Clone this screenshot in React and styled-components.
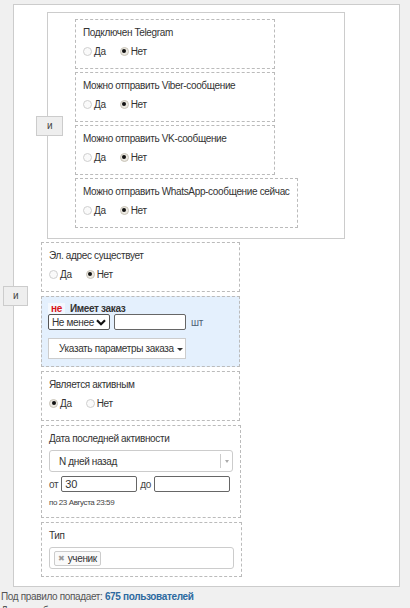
import React from 'react';
import styled, { createGlobalStyle } from 'styled-components';

const GlobalStyle = createGlobalStyle`
  html, body {
    margin: 0;
    padding: 0;
    background: #f0f0f0;
    font-family: "Liberation Sans", Arial, sans-serif;
    font-size: 10px;
    letter-spacing: -0.35px;
    color: #333;
  }
  * { box-sizing: border-box; }
`;

const Page = styled.div`
  padding-top: 4px;
  height: 608px;
  overflow: hidden;
`;

const Group = styled.div`
  position: relative;
  background: #fff;
  border: 1px solid #ccc;
  padding: ${(p) => (p.nested ? '6px 0 10px 27px' : '7px 0 9px 27px')};
  margin: ${(p) => (p.nested ? '0 0 3px 6px' : '0 10px 0 13px')};
  width: ${(p) => (p.nested ? '298px' : 'auto')};
`;

const AndButton = styled.div`
  position: absolute;
  left: ${(p) => (p.nested ? '-12px' : '-11px')};
  top: 50%;
  transform: translateY(-50%);
  width: ${(p) => (p.nested ? '27px' : '25px')};
  height: 20px;
  background: #eee;
  border: 1px solid #ccc;
  display: flex;
  align-items: center;
  justify-content: center;
  font-size: 10px;
  color: #444;
`;

const Condition = styled.div`
  display: table;
  min-width: ${(p) => (p.nested ? '200px' : '199px')};
  border: 1px dashed #bbb;
  background: ${(p) => (p.highlight ? '#e4f0fd' : '#fff')};
  padding: ${(p) => (p.highlight ? '5px 6px 7px' : `6px 7px ${p.pb ?? 10}px`)};
  margin-bottom: ${(p) => (p.nested ? 3 : 4)}px;

  &:last-child {
    margin-bottom: 0;
  }
`;

const Title = styled.div`
  line-height: 14px;
  margin-bottom: 4px;
  color: #333;
  white-space: nowrap;
`;

const RadioRow = styled.div`
  display: flex;
  align-items: center;
  gap: 14px;
  height: 14px;
`;

const RadioLabel = styled.label`
  display: flex;
  align-items: center;
  gap: 2px;
  color: #333;
`;

const RadioDot = styled.span`
  width: 9px;
  height: 9px;
  border-radius: 50%;
  border: 1px solid ${(p) => (p.checked ? '#c9c4b8' : '#cfcfcf')};
  background: ${(p) => (p.checked ? '#ebe8e1' : '#fafafa')};
  display: flex;
  align-items: center;
  justify-content: center;

  &::after {
    content: '';
    display: ${(p) => (p.checked ? 'block' : 'none')};
    width: 4px;
    height: 4px;
    border-radius: 50%;
    background: #111;
  }
`;

const OrderHead = styled.div`
  display: flex;
  align-items: center;
  gap: 5px;
  height: 12px;
`;

const NotBadge = styled.span`
  color: #d9141a;
  font-weight: bold;
  background: #f3f8fe;
  padding: 0 3px;
  line-height: 11px;
`;

const Bold = styled.span`
  font-weight: bold;
  color: #333;
`;

const FieldRow = styled.div`
  display: flex;
  align-items: center;
  gap: ${(p) => p.gap || 4}px;
  margin-bottom: ${(p) => p.mb || 0}px;
  white-space: nowrap;
`;

const FakeSelect = styled.div`
  width: 62px;
  height: 16px;
  border: 1px solid #555;
  border-radius: 2px;
  background: #fff;
  display: flex;
  align-items: center;
  justify-content: space-between;
  padding: 0 3px 0 3px;
  color: #333;
  white-space: nowrap;
`;

const TextInput = styled.div`
  width: ${(p) => p.w}px;
  height: 16px;
  border: 1px solid #666;
  border-radius: 2px;
  background: #fff;
  padding: 0 3px;
  line-height: 14px;
  color: #333;
  font-size: 11px;
  letter-spacing: 0;
`;

const Unit = styled.span`
  color: #4e6275;
  margin-left: 1px;
`;

const DropButton = styled.div`
  display: inline-flex;
  align-items: center;
  gap: 3px;
  height: 21px;
  width: 138px;
  padding: 0 0 0 10px;
  border: 1px solid #ccc;
  background: #fff;
  color: #333;
  white-space: nowrap;
`;

const Caret = styled.span`
  width: 0;
  height: 0;
  border-left: 3px solid transparent;
  border-right: 3px solid transparent;
  border-top: 3px solid #333;
  margin-top: 1px;
`;

const WideSelect = styled.div`
  width: 184px;
  height: 22px;
  border: 1px solid #ccc;
  border-radius: 3px;
  background: #fff;
  display: flex;
  align-items: stretch;
  margin-bottom: 4px;
`;

const WideSelectText = styled.div`
  flex: 1;
  display: flex;
  align-items: center;
  padding-left: 9px;
  color: #333;
`;

const WideSelectArrow = styled.div`
  width: 12px;
  border-left: 1px solid #ccc;
  margin: 3px 0;
  display: flex;
  align-items: center;
  justify-content: center;

  &::after {
    content: '';
    border-left: 2px solid transparent;
    border-right: 2px solid transparent;
    border-top: 3px solid #aaa;
  }
`;

const SmallLabel = styled.span`
  color: #444;
`;

const Hint = styled.div`
  font-size: 8px;
  letter-spacing: -0.4px;
  color: #444;
  margin-top: 5px;
  line-height: 11px;
`;

const TagBox = styled.div`
  width: 185px;
  height: 22px;
  border: 1px solid #ccc;
  border-radius: 3px;
  background: #fff;
  display: flex;
  align-items: center;
  padding-left: 4px;
`;

const Tag = styled.span`
  display: inline-flex;
  align-items: center;
  gap: 3px;
  height: 15px;
  border: 1px solid #ccc;
  border-radius: 2px;
  background: #fafafa;
  padding: 0 3px;
  color: #333;
`;

const TagX = styled.span`
  color: #999;
  font-size: 8px;
`;

const Footer = styled.div`
  padding: 3px 1px 0;
  line-height: 14px;
  color: #555;
`;

const Count = styled.span`
  color: #2d6aa0;
  font-weight: bold;
`;

const Radios = ({ yes }) => (
  <RadioRow>
    <RadioLabel>
      <RadioDot checked={yes} />
      Да
    </RadioLabel>
    <RadioLabel>
      <RadioDot checked={!yes} />
      Нет
    </RadioLabel>
  </RadioRow>
);

const Chevron = () => (
  <svg width="10" height="7" viewBox="0 0 10 7">
    <path d="M1 1.2 L5 5.2 L9 1.2" fill="none" stroke="#111" strokeWidth="2.2" />
  </svg>
);

const messengers = [
  'Подключен Telegram',
  'Можно отправить Viber-сообщение',
  'Можно отправить VK-сообщение',
  'Можно отправить WhatsApp-сообщение сейчас',
];

const App = () => (
  <>
    <GlobalStyle />
    <Page>
      <Group>
        <AndButton>и</AndButton>
        <Group nested>
          <AndButton nested>и</AndButton>
          {messengers.map((m) => (
            <Condition nested key={m}>
              <Title>{m}</Title>
              <Radios yes={false} />
            </Condition>
          ))}
        </Group>

        <Condition>
          <Title>Эл. адрес существует</Title>
          <Radios yes={false} />
        </Condition>

        <Condition highlight>
          <OrderHead>
            <NotBadge>не</NotBadge>
            <Bold>Имеет заказ</Bold>
          </OrderHead>
          <FieldRow mb={8}>
            <FakeSelect>
              Не менее
              <Chevron />
            </FakeSelect>
            <TextInput w={72} />
            <Unit>шт</Unit>
          </FieldRow>
          <DropButton>
            Указать параметры заказа
            <Caret />
          </DropButton>
        </Condition>

        <Condition>
          <Title>Является активным</Title>
          <Radios yes />
        </Condition>

        <Condition pb={9}>
          <Title>Дата последней активности</Title>
          <WideSelect>
            <WideSelectText>N дней назад</WideSelectText>
            <WideSelectArrow />
          </WideSelect>
          <FieldRow gap={3}>
            <SmallLabel>от</SmallLabel>
            <TextInput w={76}>30</TextInput>
            <SmallLabel>до</SmallLabel>
            <TextInput w={76} />
          </FieldRow>
          <Hint>по 23 Августа 23:59</Hint>
        </Condition>

        <Condition pb={7}>
          <Title>Тип</Title>
          <TagBox>
            <Tag>
              <TagX>✖</TagX>
              ученик
            </Tag>
          </TagBox>
        </Condition>
      </Group>
      <Footer>
        Под правило попадает: <Count>675 пользователей</Count>
        <br />
        Данные обновляются автоматически
      </Footer>
    </Page>
  </>
);

export default App;
